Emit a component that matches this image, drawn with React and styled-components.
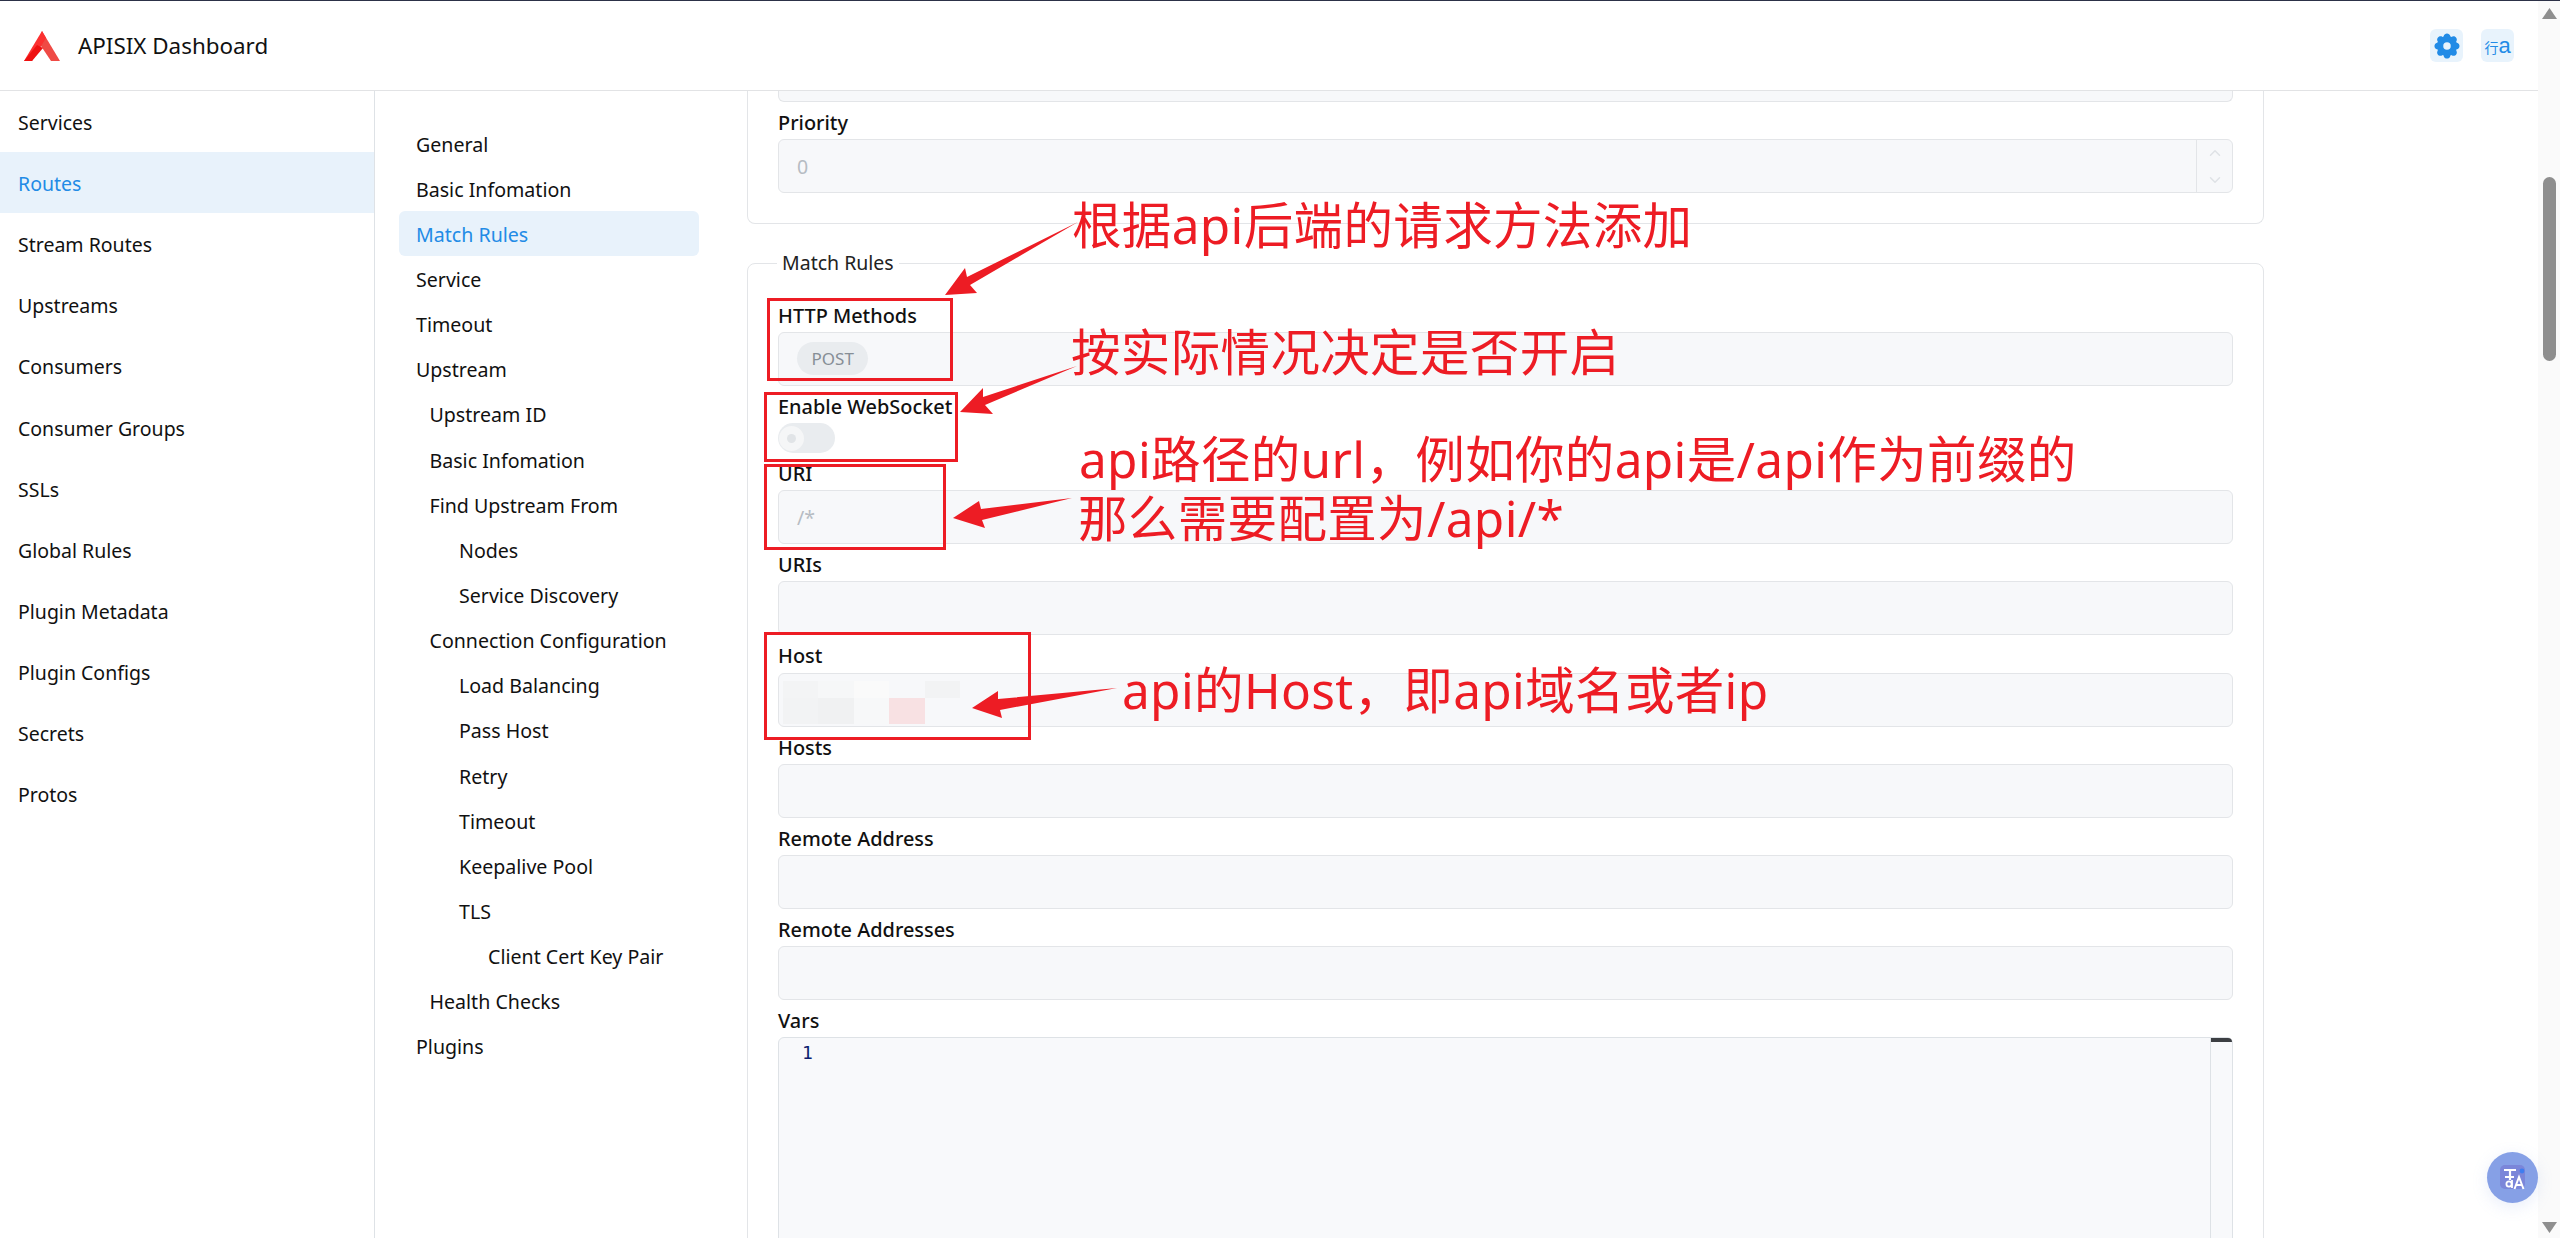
import React from 'react';
import styled, { createGlobalStyle } from 'styled-components';
import { ChevronUp, ChevronDown } from 'lucide-react';
import { TbSettingsFilled } from 'react-icons/tb';

const UI_FONT = `"Noto Sans", "Noto Sans CJK SC", sans-serif`;

const Global = createGlobalStyle`
  html, body { margin: 0; height: 100%; overflow: hidden; background: #fff; }
  body { font-family: ${UI_FONT}; color: #111; }
  * { box-sizing: border-box; }
`;

const Page = styled.div`
  position: relative;
  height: 1238px;
  display: flex;
  border-top: 1px solid #2c3147;
  overflow: hidden;
`;
const Shell = styled.div`
  flex: 1;
  min-width: 0;
  display: flex;
  flex-direction: column;
`;
const Header = styled.header`
  height: 90px;
  flex: none;
  display: flex;
  align-items: center;
  padding: 0 24px 0 24px;
  border-bottom: 1px solid #e2e3e5;
`;
const Brand = styled.div`
  font-size: 22.4px;
  margin-left: 18px;
  flex: 1;
  color: #111;
`;
const IconButton = styled.div`
  width: 33px;
  height: 33px;
  border-radius: 6px;
  background: #e8f3fc;
  color: #228be6;
  display: flex;
  align-items: center;
  justify-content: center;
  margin-left: ${p => p.$gap}px;
  font-size: 19px;
  line-height: 1;
  overflow: hidden;
`;
const LangGlyph = styled.span`
  font-family: "Noto Sans CJK SC", sans-serif;
  font-size: 14px;
  letter-spacing: 0;
  white-space: nowrap;
  & b { font-family: "Liberation Sans", sans-serif; font-weight: 400; font-size: 22px; }
`;
const Body = styled.div`
  flex: 1;
  min-height: 0;
  display: flex;
`;
const Sidebar = styled.nav`
  width: 375px;
  flex: none;
  border-right: 1px solid #dee2e6;
`;
const SideItem = styled.div`
  height: 61.15px;
  display: flex;
  align-items: center;
  padding: 1.5px 0 0 18px;
  font-size: 19.5px;
  color: ${p => (p.$active ? '#228be6' : '#111')};
  background: ${p => (p.$active ? '#e8f2fb' : 'transparent')};
`;
const SectionNav = styled.nav`
  width: 372px;
  flex: none;
  padding: 30px 48px 0 24px;
`;
const SectionItem = styled.div`
  height: 45.15px;
  display: flex;
  align-items: center;
  padding: 1px 0 0 ${p => 17 + p.$level}px;
  font-size: 19.6px;
  border-radius: 6px;
  color: ${p => (p.$active ? '#228be6' : '#111')};
  background: ${p => (p.$active ? '#e8f2fb' : 'transparent')};
`;
const Main = styled.main`
  flex: 1;
  min-width: 0;
  padding-right: 274px;
  overflow: hidden;
`;
const TopCard = styled.section`
  border: 1px solid #e3e5e8;
  border-top: 0;
  border-radius: 0 0 8px 8px;
  padding: 0 30px 30px;
`;
const Stub = styled.div`
  height: 11px;
  background: #f7f8fa;
  border: 1px solid #e3e5e8;
  border-top: 0;
  border-radius: 0 0 6px 6px;
`;
const Fieldset = styled.fieldset`
  margin: 27px 0 0;
  padding: 19.5px 30px 0;
  border: 1px solid #e3e5e8;
  border-radius: 8px;
  min-width: 0;
`;
const Legend = styled.legend`
  padding: 0 5px;
  margin-left: -1px;
  font-size: 19.5px;
  line-height: 24px;
  color: #222;
`;
const Label = styled.div`
  margin-top: 5px;
  height: 32.2px;
  line-height: 32.2px;
  font-size: 19.9px;
  font-weight: 500;
  color: #111;
`;
const Input = styled.div`
  position: relative;
  height: 54px;
  background: #f7f8fa;
  border: 1px solid #e3e5e8;
  border-radius: 6px;
  display: flex;
  align-items: center;
  padding-left: 18px;
  font-size: 19.5px;
  color: #b6bcc3;
`;
const Stepper = styled.div`
  position: absolute;
  top: 0;
  right: 0;
  bottom: 0;
  width: 36px;
  border-left: 1px solid #e3e5e8;
  display: flex;
  flex-direction: column;
  align-items: center;
  justify-content: center;
  gap: 9px;
  color: #dfe2e6;
`;
const Pill = styled.span`
  height: 33px;
  padding: 0 14.5px;
  border-radius: 17px;
  background: #e9ecef;
  color: #868e96;
  font-size: 17px;
  display: flex;
  align-items: center;
`;
const Switch = styled.div`
  width: 57px;
  height: 30px;
  border-radius: 15px;
  background: #e9ecef;
  padding: 3px 0 0 1px;
`;
const Thumb = styled.div`
  width: 25px;
  height: 25px;
  border-radius: 50%;
  background: #f5f6f7;
  display: flex;
  align-items: center;
  justify-content: center;
  &::after {
    content: '';
    display: block;
    width: 9px;
    height: 9px;
    border-radius: 50%;
    background: #e1e4e7;
  }
`;
const Mosaic = styled.div`
  position: absolute;
  left: 4px;
  top: 7px;
  display: grid;
  grid-template-columns: repeat(5, 35.4px);
  grid-template-rows: 17px 26px;
`;
const Tile = styled.div`
  background: ${p => p.$c};
`;
const Editor = styled.div`
  position: relative;
  height: 400px;
  background: #f8f9fb;
  border: 1px solid #dee2e6;
  border-radius: 6px;
  display: flex;
`;
const Gutter = styled.div`
  flex: 1;
  padding: 3px 0 0 23px;
  font-family: "DejaVu Sans Mono", monospace;
  font-size: 18px;
  line-height: 24px;
  color: #0b216f;
`;
const Minimap = styled.div`
  width: 22px;
  flex: none;
  border-left: 1px solid #dee2e6;
`;
const MinimapSlider = styled.div`
  height: 4px;
  background: #3c3f43;
  border-radius: 0 5px 0 0;
`;
const Scrollbar = styled.aside`
  width: 22px;
  flex: none;
  background: #fafafa;
  display: flex;
  flex-direction: column;
  align-items: center;
  padding-top: 7px;
`;
const ScrollThumb = styled.div`
  width: 13px;
  height: 184px;
  margin-top: 158px;
  border-radius: 7px;
  background: #8e8e8e;
`;
const ScrollArrow = styled.svg`
  width: 15px;
  height: 11px;
  flex: none;
  margin-top: ${p => p.$top || 0}px;
`;
const Overlay = styled.svg`
  position: absolute;
  left: 0;
  top: -1px;
  width: 2560px;
  height: 1238px;
  pointer-events: none;
`;
const Box = styled.div`
  position: absolute;
  left: ${p => p.$x}px;
  top: ${p => p.$y - 1}px;
  width: ${p => p.$w}px;
  height: ${p => p.$h}px;
  border: 3px solid #ed1c24;
`;
const Note = styled.div`
  position: absolute;
  left: ${p => p.$x}px;
  top: ${p => p.$y - 1}px;
  transform: translateY(-50%);
  white-space: nowrap;
  font-family: "Noto Sans", "Noto Sans CJK SC", sans-serif;
  font-size: 49.5px;
  letter-spacing: 0.35px;
  line-height: 1.2;
  color: #ed1c24;
`;
const Fab = styled.div`
  position: absolute;
  left: 2487px;
  top: 1151px;
  width: 51px;
  height: 51px;
  border-radius: 50%;
  background: #86a0e6;
  box-shadow: 0 4px 16px rgba(134, 160, 230, 0.18);
  display: flex;
  align-items: center;
  justify-content: center;
`;

const Logo = () => (
  <svg width="36" height="30" viewBox="0 0 36 30">
    <path d="M18 0 L36 30 L27 30 L15 12 Z" fill="#ef4a45" />
    <path d="M0 30 L18 0 L22 7 L8 30 Z" fill="#fb3030" />
    <path d="M0 30 L13 14 L19 17 L8 30 Z" fill="#ee1010" />
  </svg>
);

const FabIcon = () => (
  <svg width="26" height="25" viewBox="0 0 26 25">
    <rect width="25" height="24" rx="5" fill="#7b86d9" />
    <g fill="none" stroke="#fff" strokeWidth="2.2">
      <path d="M4 5h12M10 5v10M5 12h9" />
      <circle cx="9" cy="19" r="2.6" strokeWidth="1.8" />
      <path d="M12 15v8" strokeWidth="1.8" />
      <path d="M14.5 24 L19 12 L23.5 24 M16 20h6" strokeWidth="2" />
    </g>
    <circle cx="22" cy="6" r="2.4" fill="#3f7df0" />
  </svg>
);

const sideItems = ['Services', 'Routes', 'Stream Routes', 'Upstreams', 'Consumers', 'Consumer Groups', 'SSLs', 'Global Rules', 'Plugin Metadata', 'Plugin Configs', 'Secrets', 'Protos'];
const sectionItems = [
  ['General', 0], ['Basic Infomation', 0], ['Match Rules', 0], ['Service', 0], ['Timeout', 0], ['Upstream', 0],
  ['Upstream ID', 13.5], ['Basic Infomation', 13.5], ['Find Upstream From', 13.5], ['Nodes', 43], ['Service Discovery', 43],
  ['Connection Configuration', 13.5], ['Load Balancing', 43], ['Pass Host', 43], ['Retry', 43], ['Timeout', 43],
  ['Keepalive Pool', 43], ['TLS', 43], ['Client Cert Key Pair', 72], ['Health Checks', 13.5], ['Plugins', 0],
];
const tiles = ['#f3f4f5', '#f6f7f8', '#fafafa', '#f7f8fa', '#f2f3f4', '#f2f3f4', '#f0f1f2', '#f7f8f9', '#f8e1e3', '#f7f8fa'];

const arrows = [
  '1078,222 967,277 965,268 945,295 977,293 970,285',
  '1077,366 983,397 983,388 960,412 993,414 985,405',
  '1072,498 981,509 979,501 953,518 985,528 982,520',
  '1117,688 998,699 998,691 972,708 1002,718 1000,710',
];
const boxes = [
  [767, 298, 186, 83],
  [764, 392, 194, 70],
  [764, 464, 182, 86],
  [764, 632, 267, 108],
];
const notes = [
  [1072, 226, '根据api后端的请求方法添加'],
  [1071, 353, '按实际情况决定是否开启'],
  [1079, 460, 'api路径的url，例如你的api是/api作为前缀的'],
  [1078, 519, '那么需要配置为/api/*'],
  [1122, 691, 'api的Host，即api域名或者ip'],
];

export default function App() {
  return (
    <>
      <Global />
      <Page>
        <Shell>
          <Header>
            <Logo />
            <Brand>APISIX Dashboard</Brand>
            <IconButton><TbSettingsFilled size={30} /></IconButton>
            <IconButton $gap={18}><LangGlyph>行<b>a</b></LangGlyph></IconButton>
          </Header>
          <Body>
            <Sidebar>
              {sideItems.map(t => <SideItem key={t} $active={t === 'Routes'}>{t}</SideItem>)}
            </Sidebar>
            <SectionNav>
              {sectionItems.map(([t, l], i) => <SectionItem key={i} $level={l} $active={t === 'Match Rules'}>{t}</SectionItem>)}
            </SectionNav>
            <Main>
              <TopCard>
                <Stub />
                <Label>Priority</Label>
                <Input>0
                  <Stepper><ChevronUp size={18} /><ChevronDown size={18} /></Stepper>
                </Input>
              </TopCard>
              <Fieldset>
                <Legend>Match Rules</Legend>
                <Label>HTTP Methods</Label>
                <Input><Pill>POST</Pill></Input>
                <Label>Enable WebSocket</Label>
                <Switch><Thumb /></Switch>
                <Label>URI</Label>
                <Input>/*</Input>
                <Label>URIs</Label>
                <Input />
                <Label>Host</Label>
                <Input><Mosaic>{tiles.map((c, i) => <Tile key={i} $c={c} />)}</Mosaic></Input>
                <Label>Hosts</Label>
                <Input />
                <Label>Remote Address</Label>
                <Input />
                <Label>Remote Addresses</Label>
                <Input />
                <Label>Vars</Label>
                <Editor>
                  <Gutter>1</Gutter>
                  <Minimap><MinimapSlider /></Minimap>
                </Editor>
              </Fieldset>
            </Main>
          </Body>
        </Shell>
        <Scrollbar>
          <ScrollArrow viewBox="0 0 15 11"><path d="M7.5 0 L15 11 L0 11 Z" fill="#8e8e8e" /></ScrollArrow>
          <ScrollThumb />
          <ScrollArrow $top={861} viewBox="0 0 15 11"><path d="M0 0 L15 0 L7.5 11 Z" fill="#8e8e8e" /></ScrollArrow>
        </Scrollbar>
        {boxes.map(([x, y, w, h], i) => <Box key={i} $x={x} $y={y} $w={w} $h={h} />)}
        <Overlay viewBox="0 0 2560 1238">
          {arrows.map((p, i) => <polygon key={i} points={p} fill="#ed1c24" />)}
        </Overlay>
        {notes.map(([x, y, t]) => <Note key={t} $x={x} $y={y}>{t}</Note>)}
        <Fab><FabIcon /></Fab>
      </Page>
    </>
  );
}
